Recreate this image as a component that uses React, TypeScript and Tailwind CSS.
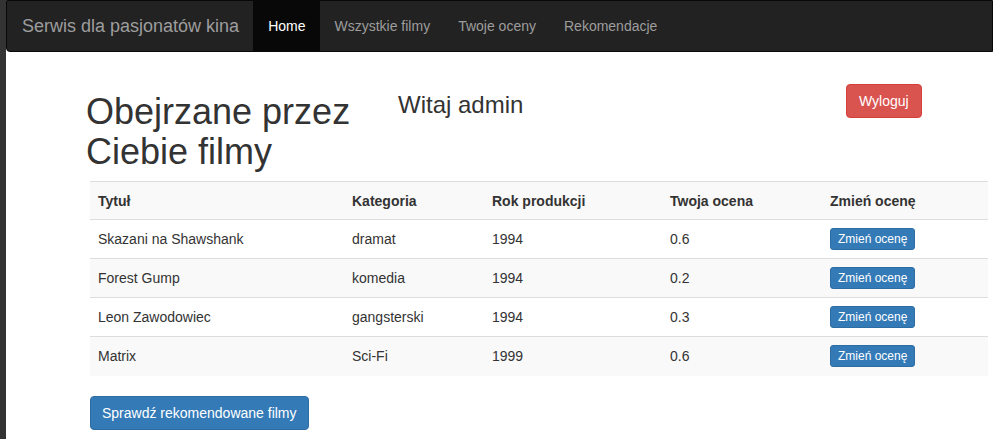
const movies = [
  {title: "Skazani na Shawshank", category: "dramat", year: "1994", rating: "0.6"},
  {title: "Forest Gump", category: "komedia", year: "1994", rating: "0.2"},
  {title: "Leon Zawodowiec", category: "gangsterski", year: "1994", rating: "0.3"},
  {title: "Matrix", category: "Sci-Fi", year: "1999", rating: "0.6"},
];

const navItems = ["Home", "Wszystkie filmy", "Twoje oceny", "Rekomendacje"];

const App = () => {
  return (
    <div className="flex min-h-[439px] bg-white text-[#333] text-[14px] leading-[20px]" style={{fontFamily: '"Liberation Sans", Arial, sans-serif'}}>
      <div className="w-[6px] shrink-0 bg-[#333]" />
      <div className="flex-1 min-w-0">
        {/* Navbar */}
        <nav className="h-[52px] flex items-stretch bg-[#222] border border-[#080808] rounded-bl-[4px] pl-[15px]">
          <span className="flex items-center pr-[14px] text-[18px] text-[#9d9d9d]">Serwis dla pasjonatów kina</span>
          {navItems.map((item, i) => (
            <span key={item} className={i === 0 ? "flex items-center px-[15px] bg-[#080808] text-white" : "flex items-center px-[14px] text-[#9d9d9d]"}>
              {item}
            </span>
          ))}
        </nav>

        <div className="pl-[78px] pt-[32px]">
          {/* Header area */}
          <div className="flex items-start">
            <h1 className="w-[314px] pl-[2px] mt-[8px] text-[36px] leading-[40px] font-normal">Obejrzane przez Ciebie filmy</h1>
            <h3 className="w-[448px] mt-[8px] text-[24px] leading-[26px] font-normal">Witaj admin</h3>
            <button className="h-[34px] px-[12px] rounded-[4px] bg-[#d9534f] border border-[#d43f3a] text-white text-[14px]">Wyloguj</button>
          </div>

          {/* Table */}
          <table className="ml-[6px] mt-[9px] w-[898px] table-fixed border-collapse">
            <colgroup>
              <col className="w-[254px]" />
              <col className="w-[140px]" />
              <col className="w-[178px]" />
              <col className="w-[160px]" />
              <col />
            </colgroup>
            <tbody>
              <tr className="h-[38px] bg-[#f9f9f9] border-t border-[#ddd]">
                <th className="px-[8px] text-left font-bold">Tytuł</th>
                <th className="px-[8px] text-left font-bold">Kategoria</th>
                <th className="px-[8px] text-left font-bold">Rok produkcji</th>
                <th className="px-[8px] text-left font-bold">Twoja ocena</th>
                <th className="px-[8px] text-left font-bold">Zmień ocenę</th>
              </tr>
              {movies.map((m, i) => (
                <tr key={m.title} className={i % 2 === 1 ? "h-[39px] bg-[#f9f9f9] border-t border-[#ddd]" : "h-[39px] bg-white border-t border-[#ddd]"}>
                  <td className="px-[8px]">{m.title}</td>
                  <td className="px-[8px]">{m.category}</td>
                  <td className="px-[8px]">{m.year}</td>
                  <td className="px-[8px]">{m.rating}</td>
                  <td className="px-[8px]">
                    <button className="px-[7px] py-[1px] rounded-[3px] bg-[#337ab7] border border-[#2e6da4] text-white text-[12px] leading-[18px]">Zmień ocenę</button>
                  </td>
                </tr>
              ))}
            </tbody>
          </table>

          <button className="ml-[6px] mt-[20px] h-[34px] px-[11px] rounded-[4px] bg-[#337ab7] border border-[#2e6da4] text-white text-[14px]">Sprawdź rekomendowane filmy</button>
        </div>
      </div>
    </div>
  );
};

export default App;
